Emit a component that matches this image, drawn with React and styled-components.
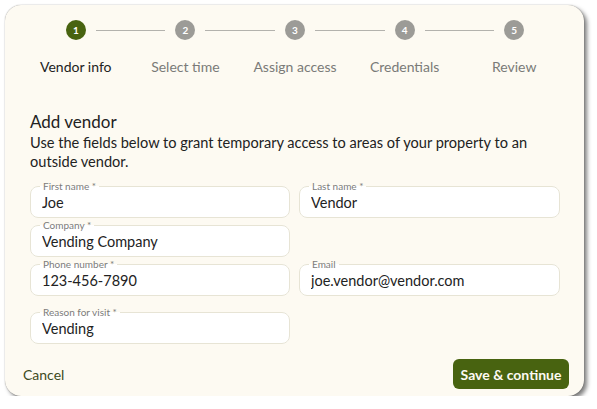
import styled, { createGlobalStyle } from "styled-components";

const steps = ["Vendor info", "Select time", "Assign access", "Credentials", "Review"];

function Field({ label, value }) {
    return (
        <StField>
            <StLegend>{label}</StLegend>
            <StInput defaultValue={value} />
        </StField>
    );
}

function App() {
    return (
        <>
            <GlobalStyle />
            <StCard>
                <StStepper>
                    {steps.map((s, i) => (
                        <StStep key={s} $last={i === steps.length - 1}>
                            <StDot $active={i === 0}>{i + 1}</StDot>
                            <StStepLabel $active={i === 0}>{s}</StStepLabel>
                        </StStep>
                    ))}
                </StStepper>
                <StForm>
                    <StTitle>Add vendor</StTitle>
                    <StDesc>
                        Use the fields below to grant temporary access to areas of your property to an
                        outside vendor.
                    </StDesc>
                    <StGrid>
                        <Field label="First name *" value="Joe" />
                        <Field label="Last name *" value="Vendor" />
                        <Field label="Company *" value="Vending Company" />
                        <div />
                        <Field label="Phone number *" value="123-456-7890" />
                        <Field label="Email" value="joe.vendor@vendor.com" />
                        <StWide>
                            <Field label="Reason for visit *" value="Vending" />
                        </StWide>
                    </StGrid>
                </StForm>
                <StFooter>
                    <StCancel>Cancel</StCancel>
                    <StSave>Save &amp; continue</StSave>
                </StFooter>
            </StCard>
        </>
    );
}

const GlobalStyle = createGlobalStyle`
    * { box-sizing: border-box; }
    body {
        margin: 0;
        background: #ffffff;
        font-family: Lato, "Noto Sans", sans-serif;
        color: #222;
    }
`;

const StCard = styled.div`
    margin: 5px 0 0 5px;
    width: 579px;
    height: 391px;
    background: #fdfaf2;
    border-radius: 16px;
    box-shadow: 0 0 1px rgba(0, 0, 0, 0.5), 3px 3px 4px rgba(0, 0, 0, 0.5);
    display: flex;
    flex-direction: column;
`;

const StStepper = styled.div`
    display: grid;
    grid-template-columns: repeat(5, 1fr);
    padding: 15px 15px 0 16px;
`;

const StStep = styled.div`
    position: relative;
    display: flex;
    flex-direction: column;
    align-items: center;

    &::after {
        content: "";
        display: ${(p) => (p.$last ? "none" : "block")};
        position: absolute;
        top: 10px;
        left: calc(50% + 20px);
        width: calc(100% - 40px);
        height: 1px;
        background: #b3b2ad;
    }
`;

const StDot = styled.div`
    width: 20px;
    height: 20px;
    border-radius: 50%;
    background: ${(p) => (p.$active ? "#486310" : "#9c9b97")};
    color: #fff;
    font-size: 10px;
    font-weight: 700;
    display: flex;
    align-items: center;
    justify-content: center;
`;

const StStepLabel = styled.div`
    margin-top: 18px;
    font-size: 14px;
    line-height: 18px;
    color: ${(p) => (p.$active ? "#222" : "#7a7a78")};
    white-space: nowrap;
`;

const StForm = styled.div`
    padding: 35px 24px 0 25px;
`;

const StTitle = styled.div`
    font-size: 17px;
    line-height: 22px;
`;

const StDesc = styled.div`
    max-width: 500px;
    font-size: 14.6px;
    line-height: 19px;
    margin-bottom: 10px;
`;

const StGrid = styled.div`
    display: grid;
    grid-template-columns: 260px 261px;
    column-gap: 9px;
    row-gap: 2px;
`;

const StWide = styled.div`
    grid-column: 1;
    margin-top: 9px;
`;

const StField = styled.fieldset`
    margin: 0;
    padding: 0 11px 4px;
    border: 1px solid #e7e4d5;
    border-radius: 8px;
    background: #fff;
    min-width: 0;
`;

const StLegend = styled.legend`
    margin-left: -2px;
    padding: 0 3px;
    font-size: 10px;
    line-height: 10px;
    color: #7c7c7a;
`;

const StInput = styled.input`
    display: block;
    width: 100%;
    height: 22px;
    border: none;
    outline: none;
    padding: 0;
    background: transparent;
    font-family: inherit;
    font-size: 14.5px;
    color: #222;
`;

const StFooter = styled.div`
    margin-top: auto;
    display: flex;
    align-items: center;
    justify-content: space-between;
    padding: 0 15px 7px 18px;
`;

const StCancel = styled.button`
    border: none;
    background: none;
    padding: 0;
    font-family: inherit;
    font-size: 14px;
    color: #3d4a22;
`;

const StSave = styled.button`
    height: 30px;
    width: 116px;
    border: none;
    border-radius: 6px;
    background: #486310;
    color: #fdfaf2;
    font-family: inherit;
    font-size: 14px;
    font-weight: 700;
    padding: 0;
`;

export default App;
